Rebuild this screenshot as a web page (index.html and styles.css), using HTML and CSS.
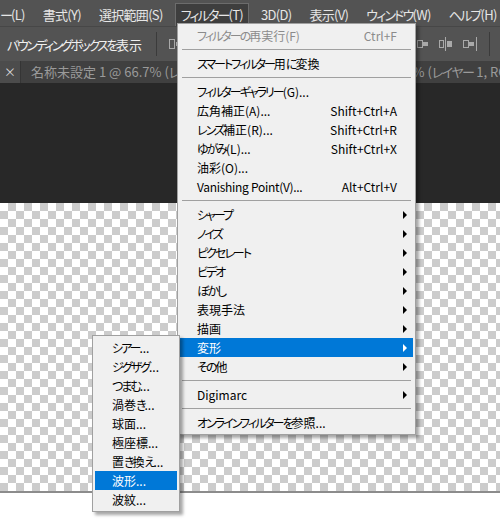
FILE: index.html
```html
<!DOCTYPE html>
<html lang="ja">
<head>
<meta charset="utf-8">
<title>Photoshop フィルター</title>
<link rel="stylesheet" href="styles.css">
</head>
<body>
<div class="menubar">
  <span class="mb-item first"><span class="k">ー</span>(L)</span>
  <span class="mb-item">書式(Y)</span>
  <span class="mb-item">選択範囲(S)</span>
  <span class="mb-item active"><span class="k">フィルター</span>(T)</span>
  <span class="mb-item">3D(D)</span>
  <span class="mb-item">表示(V)</span>
  <span class="mb-item"><span class="k">ウィンドウ</span>(W)</span>
  <span class="mb-item"><span class="k">ヘルプ</span>(H)</span>
</div>
<div class="toolbar">
  <span class="tb-label"><span class="k">バウンディングボックスを</span>表示</span>
  <span class="tb-sep"></span>
  <svg class="tb-icon" width="13" height="12" viewBox="0 0 13 12"><rect x="0.5" y="1.5" width="5" height="9" fill="none" stroke="#a9a9a9"/><rect x="7" y="4" width="5" height="4" fill="#a9a9a9"/></svg>
  <span class="tb-right">
    <svg class="tb-icon" width="15" height="14" viewBox="0 0 15 14"><rect x="0" y="0" width="1" height="14" fill="#a9a9a9"/><rect x="3.5" y="3.5" width="5" height="7" fill="none" stroke="#a9a9a9"/><rect x="9" y="5" width="5" height="4" fill="#a9a9a9"/></svg>
    <svg class="tb-icon" width="15" height="14" viewBox="0 0 15 14"><rect x="7" y="0" width="1" height="14" fill="#a9a9a9"/><rect x="1.5" y="3.5" width="4" height="7" fill="none" stroke="#a9a9a9"/><rect x="9" y="4" width="5" height="6" fill="#a9a9a9"/></svg>
    <svg class="tb-icon" width="15" height="14" viewBox="0 0 15 14"><rect x="14" y="0" width="1" height="14" fill="#a9a9a9"/><rect x="1.5" y="3.5" width="5" height="7" fill="none" stroke="#a9a9a9"/><rect x="7" y="5" width="5" height="4" fill="#a9a9a9"/></svg>
    <span class="tb-sep right"></span>
  </span>
</div>
<div class="tabbar">
  <span class="tab-close">×</span>
  <span class="tab">名称未設定 1 @ 66.7% (<span class="k">レイヤー</span> 1, RGB/8) *</span>
  <span class="tab">名称未設定 2 @ 66.7% (<span class="k">レイヤー</span> 1, RGB/8) *</span>
</div>
<div class="workspace"></div>
<div class="checker"></div>
<div class="rule"></div>

<div class="dropdown main-menu">
  <div class="mi disabled"><span><span class="k">フィルターの</span>再実行(F)</span><span class="key">Ctrl+F</span></div>
  <div class="sep"></div>
  <div class="mi"><span><span class="k">スマートフィルター</span>用<span class="k">に</span>変換</span></div>
  <div class="sep"></div>
  <div class="mi"><span><span class="k">フィルターギャラリー</span>(G)...</span></div>
  <div class="mi"><span>広角補正(A)...</span><span class="key">Shift+Ctrl+A</span></div>
  <div class="mi"><span><span class="k">レンズ</span>補正(R)...</span><span class="key">Shift+Ctrl+R</span></div>
  <div class="mi"><span><span class="k">ゆがみ</span>(L)...</span><span class="key">Shift+Ctrl+X</span></div>
  <div class="mi"><span>油彩(O)...</span></div>
  <div class="mi"><span class="latin">Vanishing Point(V)...</span><span class="key">Alt+Ctrl+V</span></div>
  <div class="sep"></div>
  <div class="mi"><span class="k">シャープ</span><span class="arrow"></span></div>
  <div class="mi"><span class="k">ノイズ</span><span class="arrow"></span></div>
  <div class="mi"><span class="k">ピクセレート</span><span class="arrow"></span></div>
  <div class="mi"><span class="k">ビデオ</span><span class="arrow"></span></div>
  <div class="mi"><span class="k">ぼかし</span><span class="arrow"></span></div>
  <div class="mi"><span>表現手法</span><span class="arrow"></span></div>
  <div class="mi"><span>描画</span><span class="arrow"></span></div>
  <div class="mi sel"><span>変形</span><span class="arrow"></span></div>
  <div class="mi"><span><span class="k">その</span>他</span><span class="arrow"></span></div>
  <div class="sep"></div>
  <div class="mi"><span>Digimarc</span><span class="arrow"></span></div>
  <div class="sep"></div>
  <div class="mi"><span><span class="k">オンラインフィルターを</span>参照...</span></div>
</div>

<div class="dropdown sub-menu">
  <div class="mi"><span><span class="k">シアー</span>...</span></div>
  <div class="mi"><span><span class="k">ジグザグ</span>...</span></div>
  <div class="mi"><span><span class="k">つまむ</span>...</span></div>
  <div class="mi"><span>渦巻<span class="k">き</span>...</span></div>
  <div class="mi"><span>球面...</span></div>
  <div class="mi"><span>極座標...</span></div>
  <div class="mi"><span>置<span class="k">き</span>換<span class="k">え</span>...</span></div>
  <div class="mi sel"><span>波形...</span></div>
  <div class="mi"><span>波紋...</span></div>
</div>
</body>
</html>
```
FILE: styles.css
```css
* { box-sizing: border-box; }
html, body { margin: 0; padding: 0; }
body {
  width: 500px;
  height: 530px;
  overflow: hidden;
  position: relative;
  background: #ffffff;
  font-family: "Noto Sans CJK JP", "Noto Sans", sans-serif;
  font-feature-settings: "palt";
}

/* menu bar */
.menubar {
  height: 26px;
  background: #535353;
  display: flex;
  padding-top: 3px;
  font-size: 13px;
  color: #e6e6e6;
  white-space: nowrap;
  overflow: hidden;
}
.menubar .k { letter-spacing: -1.8px; }
.mb-item {
  padding: 0 5px;
  margin-right: 6px;
  line-height: 21px;
  letter-spacing: -0.7px;
  border: 1px solid transparent;
  border-bottom: none;
}
.mb-item.first { margin-left: -6px; }
.mb-item.active {
  background: #3e3e3e;
  border-color: #6c6c6c;
}

/* options bar */
.toolbar {
  height: 35px;
  background: #535353;
  border-top: 1px solid #474747;
  display: flex;
  align-items: center;
  padding-left: 7px;
  font-size: 13px;
  color: #f0f0f0;
  white-space: nowrap;
}
.toolbar .k { letter-spacing: -2.4px; }
.tb-sep {
  width: 1px;
  height: 24px;
  background: #3b3b3b;
  margin: 0 12px 0 14px;
}
.tb-icon { display: block; flex: none; }
.tb-right {
  margin-left: auto;
  display: flex;
  align-items: center;
  gap: 9px;
}
.tb-sep.right { margin: 0 10px 0 3px; }

/* document tabs */
.tabbar {
  height: 22px;
  background: #404040;
  display: flex;
  font-size: 13px;
  color: #9a9a9a;
  white-space: nowrap;
  overflow: hidden;
}
.tabbar .k { letter-spacing: -1.5px; }
.tab-close {
  width: 21px;
  flex: none;
  background: #4c4c4c;
  color: #d8d8d8;
  font-size: 12px;
  line-height: 22px;
  text-align: center;
  border-right: 1px solid #353535;
}
.tab {
  flex: none;
  width: 263px;
  padding-left: 10px;
  line-height: 22px;
  overflow: hidden;
}

.workspace { height: 120px; background: #282828; }
.checker {
  height: 288px;
  background: repeating-conic-gradient(#cccccc 0 25%, #ffffff 0 50%) 0 0 / 16px 16px;
}
.rule { height: 2px; background: #8c8c8c; }

/* dropdown menus */
.dropdown {
  position: absolute;
  background: #f0f0f0;
  border: 1px solid #a0a0a0;
  padding: 2px;
  box-shadow: 3px 3px 3px rgba(0, 0, 0, 0.35);
  font-size: 12px;
  color: #000;
  white-space: nowrap;
}
.dropdown .k { letter-spacing: -2px; }
.dropdown .latin { letter-spacing: -0.3px; }
.main-menu { left: 177px; top: 23px; width: 239px; }
.sub-menu { left: 92px; top: 335px; width: 88px; z-index: 2; }

.mi {
  height: 19px;
  line-height: 19px;
  display: flex;
  align-items: center;
  padding: 0 16px 0 17px;
}
.mi .key { margin-left: auto; }
.mi.disabled { color: #8b8b8b; }
.mi.sel { background: #0078d7; color: #fff; }
.arrow {
  margin-left: auto;
  margin-right: -10px;
  width: 0;
  height: 0;
  border-left: 4px solid #000;
  border-top: 4px solid transparent;
  border-bottom: 4px solid transparent;
}
.mi.sel .arrow { border-left-color: #fff; }
.sep {
  height: 9px;
  display: flex;
  align-items: center;
  padding: 0 2px;
}
.sep::before {
  content: "";
  flex: 1;
  border-top: 1px solid #a0a0a0;
}
```
